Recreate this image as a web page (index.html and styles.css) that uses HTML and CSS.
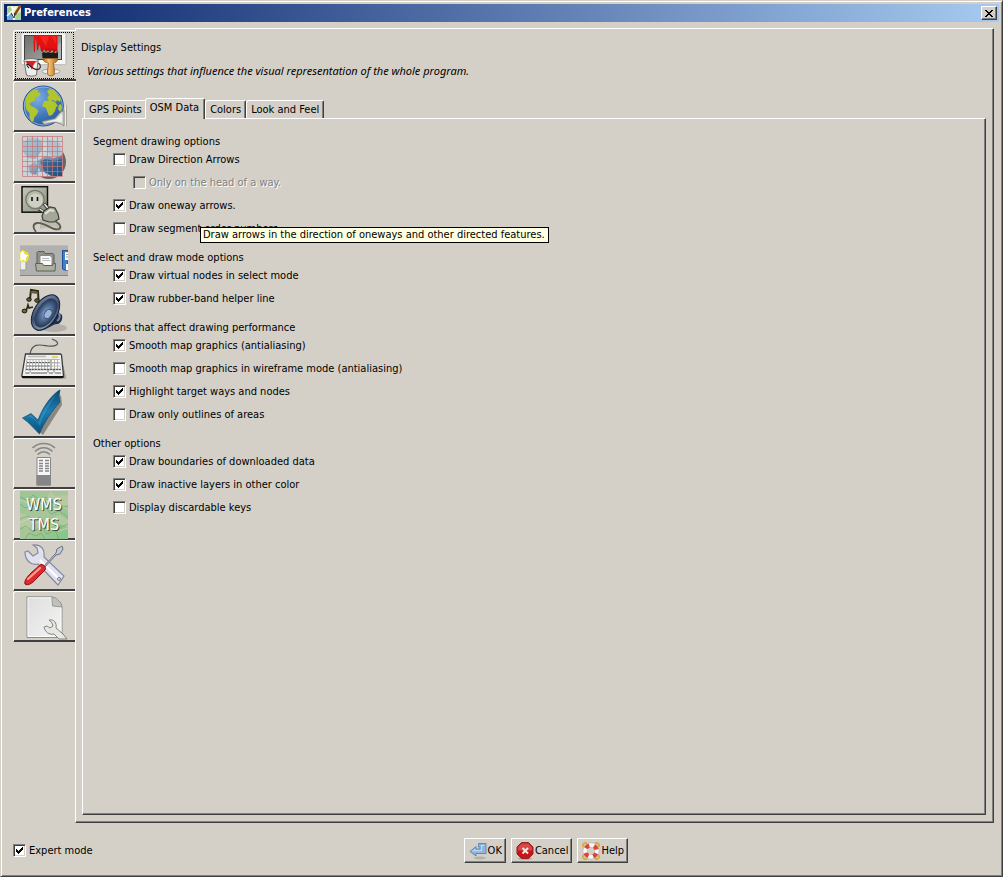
FILE: index.html
```
<!DOCTYPE html>
<html lang="en">
<head>
<meta charset="utf-8">
<title>Preferences</title>
<link rel="stylesheet" href="styles.css">
</head>
<body>
<div class="window">
  <header class="titlebar">
    <svg class="titlebar-icon" viewBox="0 0 16 16" aria-hidden="true">
      <rect x="1" y="1" width="14" height="14" rx="1" fill="#e9e6c0"/>
      <path d="M1 3l4-1 3 3-2 3-5 1z" fill="#9fcf8a"/>
      <path d="M1 9l5-1 2 3-1 4H1z" fill="#6aaede"/>
      <path d="M10 9l5-2v8H9z" fill="#a4d496"/>
      <path d="M1 11l9-9M6 1l2 14" stroke="#fff" stroke-width="1.600"/>
      <path d="M14.500 .5L8.500 10" stroke="#8a4a18" stroke-width="2.400"/>
      <path d="M5 8l3 5 1-5" fill="none" stroke="#333" stroke-width="1"/>
    </svg>
    <h1 class="titlebar-text">Preferences</h1>
    <button class="close" type="button" aria-label="Close">
      <svg width="8" height="7" viewBox="0 0 8 7" shape-rendering="crispEdges" aria-hidden="true"><path d="M0 0h2v1h1v1h2v-1h1v-1h2v1h-1v1h-1v1h-1v1h1v1h1v1h1v1h-2v-1h-1v-1h-2v1h-1v1h-2v-1h1v-1h1v-1h1v-1h-1v-1h-1v-1h-1z"/></svg>
    </button>
  </header>

  <div class="main">
    <nav class="categories" aria-label="Categories">
      <button class="category category-selected" type="button" aria-label="Display Settings">
        <svg class="category-icon" viewBox="0 0 48 48">
          <defs>
            <linearGradient id="screen" x1="0" y1="0" x2="1" y2="1"><stop offset="0" stop-color="#6c6f6c"/><stop offset="1" stop-color="#a9aca9"/></linearGradient>
            <linearGradient id="wood"><stop offset="0" stop-color="#b46a10"/><stop offset=".4" stop-color="#f3c078"/><stop offset="1" stop-color="#b46a10"/></linearGradient>
            <linearGradient id="paint" x1="0" y1="0" x2="0" y2="1"><stop offset="0" stop-color="#e81410"/><stop offset=".7" stop-color="#e01010"/><stop offset="1" stop-color="#a80808"/></linearGradient>
          </defs>
          <ellipse cx="31" cy="39.500" rx="9" ry="2.500" fill="#eee" stroke="#888" stroke-width=".7"/>
          <rect x="1" y=".7" width="45" height="32" rx="1.500" fill="#f6f6f4" stroke="#a9aba8" stroke-width=".8"/>
          <rect x="4.500" y="3.500" width="37" height="24" fill="url(#screen)" stroke="#404240"/>
          <path d="M24 27L41 10v17z" fill="#c5c7c5" opacity=".45"/>
          <path d="M14 3.500H37.500V21l-1.500-2-2 2-2-3-2 3-2-3-2 2-2-3-1 3-2-1-1-5-1-1-1 5-1 .5-.5-9-1-3-.500 13-1 .5-.500-10z" fill="url(#paint)"/>
          <path d="M20 4h9l-3 10-3-4zM31 4h5v8z" fill="#ff3028" opacity=".6"/>
          <path d="M22 21l2-1 2 1 2-1 3 1 2-1 2 1 3-1v6H22.500z" fill="#1c1c1c"/>
          <path d="M23 26.500h14.500c.5 3-2 4-4 4.500 0 3 1.500 7 .8 11-.6 2.500-6 2.500-6.600 0-.7-4 .9-8 .6-11-2-.5-5.300-1-5.300-4.500z" fill="url(#wood)" stroke="#8a4c08" stroke-width=".7"/>
          <path d="M4 28.500l2.500 14.500c2 1.500 8 1.500 10 0L18 28.500z" fill="#eceeec" stroke="#555" stroke-width=".8"/>
          <ellipse cx="11" cy="28.500" rx="7" ry="2" fill="#f4dede" stroke="#666" stroke-width=".8"/>
          <path d="M6 29h10l-3 5-1 4-2-4-3-2z" fill="#e11c1c"/>
          <path d="M9 36c-3-3-3-5 0-3 4 3 7 6 10 4 2-1 2-5-1-6" fill="none" stroke="#252525" stroke-width="1.100"/>
        </svg>
      </button>
      <button class="category" type="button" aria-label="Connection Settings">
        <svg class="category-icon" viewBox="0 0 48 48">
          <defs>
            <radialGradient id="sea" cx=".35" cy=".3" r=".8"><stop offset="0" stop-color="#7eaee0"/><stop offset=".6" stop-color="#3f74b8"/><stop offset="1" stop-color="#24559a"/></radialGradient>
          </defs>
          <circle cx="23.300" cy="23" r="20" fill="url(#sea)" stroke="#1f4f94"/>
          <circle cx="23.300" cy="23" r="19" fill="none" stroke="#9dc0ea" stroke-width=".8"/>
          <path d="M5.500 17c1-5 5-9 9-10.500l4 .5-1 2 3 1-1 3-4 1-1 4-3 1-2 2 2 2 4 2 3 3-2 4-2 2-1 4-2 1-2-5v-4l-3-3-1-4z" fill="#b1c52c"/>
          <path d="M27 8l3-2 4 1 4 5 3 4-1 3-3-2-1 2-3-2-3 1-3-3 2-3zM24 18l6-1 5 2 3 4-2 1-1 4-3 4-3 1-2-5-1-3-4-2z" fill="#b1c52c"/>
          <path d="M39 22l2-1 1 4-2 4-2-3z" fill="#b1c52c"/>
          <path d="M22 38.500l13-3 5-6 4-2V43l-3-2-6-2-11 2.500z" fill="#c9cbc6" stroke="#7d807a" stroke-width=".8"/>
          <path d="M24 39.500l12-3 6-6v9l-6-1z" fill="#eef0ec"/>
          <path d="M46.500 22v22" stroke="#a9a7a2"/><path d="M45.500 22v22" stroke="#ecebe8"/>
        </svg>
      </button>
      <button class="category" type="button" aria-label="Map Settings">
        <svg class="category-icon" viewBox="0 0 48 48">
          <defs>
            <linearGradient id="mapfade" x1="0" y1="0" x2="1" y2="1"><stop offset="0" stop-color="#b4c3cf"/><stop offset=".5" stop-color="#93abc0"/><stop offset="1" stop-color="#245080"/></linearGradient>
          </defs>
          <circle cx="29" cy="28" r="17" fill="#494b4d" opacity=".8"/>
          <rect x="2.500" y="2.500" width="40" height="40" fill="#ccd2d5"/>
          <path d="M3 8l9-5 9 3 2 8-5 8-3 3-7-1-5-6zM17 27l8-5 9 2 8-3v21H31l-6-4-5-1zM8 32l7-4 4 5-3 8-6-2z" fill="url(#mapfade)"/>
          <path d="M27 5l13 4 2 12-9 2-6-5z" fill="#b2c2cc"/>
          <path d="M20 27l6-2 8 2 8-2v17H33l-8-3z" fill="#1f4f80" opacity=".65"/>
          <path d="M2.500 2.500h40v40h-40zM7.500 2.500v40M12.500 2.500v40M17.500 2.500v40M22.500 2.500v40M27.500 2.500v40M32.500 2.500v40M37.500 2.500v40M2.500 7.500h40M2.500 12.500h40M2.500 17.500h40M2.500 22.500h40M2.500 27.500h40M2.500 32.500h40M2.500 37.500h40" fill="none" stroke="#c87478" stroke-width="1" opacity=".7"/>
        </svg>
      </button>
      <button class="category" type="button" aria-label="Plugins">
        <svg class="category-icon" viewBox="0 0 48 48">
          <defs>
            <linearGradient id="plate" x1="0" y1="0" x2="1" y2="1"><stop offset="0" stop-color="#c5c8b8"/><stop offset="1" stop-color="#8b9080"/></linearGradient>
          </defs>
          <path d="M20 34l20 4 2 9-8-6-14 3z" fill="#8c8a84" opacity=".3"/>
          <rect x="2" y="1.700" width="25.500" height="25.500" fill="url(#plate)" stroke="#111" stroke-width="1.500"/>
          <circle cx="15" cy="14.500" r="9.200" fill="#b6baaa" stroke="#757a6b" stroke-width="1.300"/>
          <circle cx="15.500" cy="15.500" r="7" fill="#cdd0c3"/>
          <path d="M12 12v4M17.500 12v4" stroke="#111" stroke-width="1.600"/>
          <path d="M19 24l6 4M24 18.500l5 6" stroke="#333" stroke-width="3.200"/>
          <path d="M19.500 24l6 4M24.500 19l5 6" stroke="#eee" stroke-width="1.400"/>
          <path d="M22 31l2-5 6-4 5 1 3 6 1 5-5 3-5 0-6-2z" fill="#a3a896" stroke="#3c4034" stroke-width="1.200"/>
          <path d="M25 29l5-4 4 1" stroke="#e2e4da" stroke-width="2" fill="none"/>
          <path d="M35 36c5 3 7 6 4 8-5 3-14-7-22-6-5 1-4 5-1 9" fill="none" stroke="#585d4d" stroke-width="1.800"/>
        </svg>
      </button>
      <button class="category" type="button" aria-label="Toolbar">
        <svg class="category-icon" viewBox="0 0 48 48">
          <rect y="9" width="48" height="31" fill="#b0b0b0"/>
          <path d="M0 9.500h48" stroke="#bcbcbc"/><path d="M0 39.500h48" stroke="#858585"/>
          <path d="M0 17h6v17H0z" fill="#eeeeea" stroke="#999"/>
          <circle cx="3" cy="20.500" r="6" fill="#f5e92a" opacity=".8"/>
          <path d="M3 14l2 4 4 1-3 3 1 4-4-2-3 2v-9z" fill="#fff" stroke="#e6d200" stroke-width=".6"/>
          <path d="M17 31V16.500l1-1h6l1 2h7.500l1.500 1V31z" fill="#8e9384" stroke="#5d6155"/>
          <path d="M20 19.500h10l2 2V31H20z" fill="#fafafa" stroke="#888"/>
          <path d="M22 22.500h7M22 24.500h8" stroke="#bbb"/>
          <path d="M15.500 27.500h7l1 2h9l1-2h2l-.5 7.500H16.500z" fill="#abb09f" stroke="#5d6155"/>
          <path d="M42.500 14.500H48V34h-4l-1.500-1z" fill="#3f80c8" stroke="#1e4f92"/>
          <path d="M45 15h3v9h-3zM46 28h2v6h-2z" fill="#fff"/><path d="M45 15.500h3" stroke="#e24b20" stroke-width="1.500"/>
          <path d="M46 18.500h2M46 21h2" stroke="#999"/>
        </svg>
      </button>
      <button class="category" type="button" aria-label="Audio Settings">
        <svg class="category-icon" viewBox="0 0 48 48">
          <defs>
            <linearGradient id="cone" x1="0" y1="0" x2="1" y2="1"><stop offset="0" stop-color="#8393ad"/><stop offset=".5" stop-color="#3a4d6e"/><stop offset="1" stop-color="#aab9cf"/></linearGradient>
            <radialGradient id="horn"><stop offset="0" stop-color="#b9cce6"/><stop offset=".35" stop-color="#6080ac"/><stop offset="1" stop-color="#263650"/></radialGradient>
          </defs>
          <ellipse cx="34" cy="41" rx="13" ry="4" fill="#77736c" opacity=".35"/>
          <path d="M34 8c4 6 3 12 3 16l5 4c1 4-1 8-4 9-5-1-11 7-21 7z" fill="#1e2b45"/>
          <path d="M38 26c3 2 2 6-1 8" stroke="#7486a4" stroke-width="2" fill="none"/>
          <ellipse cx="25.500" cy="25.500" rx="11.500" ry="19.500" transform="rotate(32 25.500 25.500)" fill="url(#cone)" stroke="#16213a" stroke-width="1"/>
          <ellipse cx="26" cy="26" rx="9" ry="16" transform="rotate(32 26 26)" fill="url(#horn)"/>
          <ellipse cx="28" cy="27" rx="3.500" ry="5" transform="rotate(32 28 27)" fill="#9fb5d4" stroke="#3c5580"/>
          <path d="M10 12l1-9 7 1 .5 9" fill="none" stroke="#2d2914" stroke-width="2"/>
          <path d="M10.500 5l7.500 1" stroke="#5f5836" stroke-width="2"/>
          <ellipse cx="9" cy="12.500" rx="2.300" ry="1.800" fill="#5f5836" stroke="#1a1808"/><ellipse cx="17" cy="13.500" rx="2.300" ry="1.800" fill="#5f5836" stroke="#1a1808"/>
          <ellipse cx="4.500" cy="24" rx="2.400" ry="1.900" fill="#6e673f" stroke="#1a1808"/>
          <path d="M6.500 23l1.500-5 1 3 4-1" fill="none" stroke="#2d2914" stroke-width="1.600"/>
        </svg>
      </button>
      <button class="category" type="button" aria-label="Keyboard Shortcuts">
        <svg class="category-icon" viewBox="0 0 48 48">
          <path d="M3 40.500h43l-1-6-4-16 3 21z" fill="#777" opacity=".6"/>
          <path d="M10 16c2-12 11-9 18-8 8 1 12-2 8-5l-4-2" fill="none" stroke="#555" stroke-width="1.200"/>
          <path d="M5.500 16h35l1 1L43.500 38l-1.500 1.500H3L1.800 38z" fill="#efefed" stroke="#3b3b3b" stroke-width="1.300"/>
          <path d="M2 39h41.500" stroke="#101010" stroke-width="2"/>
          <path d="M8 18.500h18" stroke="#b9b9b7" stroke-width="1.500"/><path d="M32 19h6" stroke="#e0cf3c" stroke-width="1.600"/>
          <path d="M6.500 21h33l1.500 13.500H5z" fill="#b4b4b2"/>
          <path d="M7.500 23h22M7 26.500h23M7 29.500h23M32 23h8M32 26.500h8M32 29.500h8.500" stroke="#fff" stroke-width="2" stroke-dasharray="2 1"/>
          <path d="M7 24.500h22.500M6.500 28h23.500M6 31.500h35" stroke="#555" stroke-width=".9" stroke-dasharray="2 1"/>
          <path d="M5.500 33.500h4M11 33.500h16M29 33.500h4M35 33.500h6" stroke="#fff" stroke-width="2.200"/>
          <path d="M5.500 35h4M11 35h16M29 35h4M35 35h6" stroke="#555" stroke-width=".9"/>
        </svg>
      </button>
      <button class="category" type="button" aria-label="Data Validator">
        <svg class="category-icon" viewBox="0 0 48 48">
          <defs>
            <linearGradient id="tick" x1="0" y1="0" x2="0" y2="1"><stop offset="0" stop-color="#0b4a74"/><stop offset=".5" stop-color="#1a7fb2"/><stop offset="1" stop-color="#0c4f7c"/></linearGradient>
          </defs>
          <path d="M6 31l8-3 6 6L41 6l1 10L23 46z" fill="#5a5852" opacity=".6"/>
          <path d="M2.500 29l8.500-4.500 7 6.500C22 20 29 9 38 2l2-1c-1 5-1 8 0 12-8 9-16 20-20.500 32C14 40 10 34 2.500 29z" fill="url(#tick)" stroke="#0a426a" stroke-width=".6"/>
          <path d="M5 29l6-3 7.500 7.500C23 22 29 12 37 5c-5 7-13 18-17 32-3-5-7-8-10-9z" fill="#4ba4cf" opacity=".4"/>
        </svg>
      </button>
      <button class="category" type="button" aria-label="Remote Control">
        <svg class="category-icon" viewBox="0 0 48 48">
          <g fill="none" stroke="#868686" stroke-width="1.600"><path d="M12.500 8c6-6 16.500-6 22.500 0"/><path d="M15 11.500c5-5 12.500-5 17.500 0"/><path d="M17.500 14.500c4-3.500 8.500-3.500 12.500 0"/></g>
          <path d="M17 17.500h13.500V45H17z" fill="#f6f6f6" stroke="#868686" stroke-width="1"/>
          <path d="M16.500 35h14.500v10.500H16.500z" fill="#868686"/>
          <path d="M19 20.500h4M25 20.500h4M19 23.500h4M25 23.500h4M19 26h4M25 26h4M19 28.500h4M25 28.500h4M19 31h4M25 31h4" stroke="#868686" stroke-width="1.500"/>
        </svg>
      </button>
      <button class="category" type="button" aria-label="Imagery Preferences">
        <svg class="category-icon" viewBox="0 0 48 48">
          <defs><linearGradient id="terrain" x1="0" y1="0" x2="1" y2="1"><stop offset="0" stop-color="#9cc595"/><stop offset=".5" stop-color="#a9c59a"/><stop offset="1" stop-color="#84c588"/></linearGradient></defs>
          <rect width="48" height="48" fill="url(#terrain)"/>
          <path d="M30 0l6 5 12-1v12l-9-3-7 3-6-6zM0 22l8 2 5 6-4 8-9-2zM34 26l6-2 8 5v7l-8-3z" fill="#bdc9a4" opacity=".8"/>
          <path d="M0 6l7 3 6-5 7 5 6-3 4 6 8-2 5 6 5-1M0 13l5 4 8-3 4 6 9-3 5 6 8-3 9 6M0 28l8-3 5 5 7-4 5 7 9-3 5 7 9-4M0 38l6-3 7 6 8-5 6 7 8-4 4 9M5 48l4-6 7 3 5-3 4 6" fill="none" stroke="#6fae70" stroke-width="1" opacity=".75"/>
          <path d="M0 9l8 3 5-5 7 6 7-3 5 5 7-2 9 6M0 32l8-4 6 5 6-3 6 6 9-2 4 6 9-3" fill="none" stroke="#d0dcba" stroke-width=".8" opacity=".8"/>
          <g class="imagery-text"><text x="24" y="19">WMS</text><text x="24" y="39">TMS</text></g>
        </svg>
      </button>
      <button class="category" type="button" aria-label="Advanced Tools">
        <svg class="category-icon" viewBox="0 0 48 48">
          <path d="M5 10l3-1 5 5 5-3-1-5-4-3c8-1 12 4 11 12l20 19-6 9-20-21C11 24 5 18 5 10z" fill="#e0e1ee" stroke="#85889b" stroke-width="1.200"/>
          <path d="M20 18l19 19" stroke="#fff" stroke-width="2"/>
          <circle cx="39" cy="37" r="1.600" fill="#d4d0c8" stroke="#85889b"/>
          <path d="M24 24l12-13 1-4 5-3 1 3-3 5-4 1-12 13z" fill="#c4c9d6" stroke="#697083" stroke-width="1"/>
          <path d="M5 42c-1-3 2-7 6-11l9-8c2-2 7 2 5 5l-9 9c-4 5-9 7-11 5z" fill="#dc2b2f" stroke="#98090d" stroke-width="1"/>
          <path d="M8 37l12-11" stroke="#ff9c98" stroke-width="2.200" stroke-linecap="round"/>
        </svg>
      </button>
      <button class="category" type="button" aria-label="Advanced Preferences">
        <svg class="category-icon" viewBox="0 0 48 48">
          <defs><linearGradient id="page" x1="0" y1="0" x2="1" y2="1"><stop offset="0" stop-color="#dedede"/><stop offset="1" stop-color="#f4f4f4"/></linearGradient></defs>
          <path d="M7 3.800h25L42 13.500v31H7z" fill="url(#page)" stroke="#8b8d89"/>
          <path d="M8 4.800h23.500L41 14v29.500H8z" fill="none" stroke="#fff" stroke-width=".8"/>
          <path d="M32 4l.5 9 9.500 1-1-4-5-5z" fill="#c0c0bd" stroke="#8b8d89" stroke-width=".8"/>
          <path d="M24 34l3-1 3 2 3-2-1-3-3-3c5-1 8 3 7 8l7 6 4 5h-8l-5-5c-5 1-9-2-10-7z" fill="#e6e8e3" stroke="#80837c" stroke-width="1"/>
        </svg>
      </button>
    </nav>

    <main class="panel">
      <h2 class="panel-title">Display Settings</h2>
      <p class="panel-note">Various settings that influence the visual representation of the whole program.</p>
      <div class="tabs" role="tablist">
        <button class="tab" type="button" role="tab">GPS Points</button>
        <button class="tab tab-selected" type="button" role="tab" aria-selected="true">OSM Data</button>
        <button class="tab" type="button" role="tab">Colors</button>
        <button class="tab" type="button" role="tab">Look and Feel</button>
      </div>
      <form class="options" role="tabpanel">
        <section class="group">
          <h3 class="group-title">Segment drawing options</h3>
          <label class="option"><input class="check" type="checkbox">Draw Direction Arrows</label>
          <label class="option option-nested option-disabled"><input class="check" type="checkbox" disabled>Only on the head of a way.</label>
          <div class="tip-anchor">
            <label class="option"><input class="check" type="checkbox" checked aria-describedby="tip">Draw oneway arrows.</label>
            <div class="tooltip" id="tip" role="tooltip">Draw arrows in the direction of oneways and other directed features.</div>
          </div>
          <label class="option"><input class="check" type="checkbox">Draw segment order numbers</label>
        </section>
        <section class="group">
          <h3 class="group-title">Select and draw mode options</h3>
          <label class="option"><input class="check" type="checkbox" checked>Draw virtual nodes in select mode</label>
          <label class="option"><input class="check" type="checkbox" checked>Draw rubber-band helper line</label>
        </section>
        <section class="group">
          <h3 class="group-title">Options that affect drawing performance</h3>
          <label class="option"><input class="check" type="checkbox" checked>Smooth map graphics (antialiasing)</label>
          <label class="option"><input class="check" type="checkbox">Smooth map graphics in wireframe mode (antialiasing)</label>
          <label class="option"><input class="check" type="checkbox" checked>Highlight target ways and nodes</label>
          <label class="option"><input class="check" type="checkbox">Draw only outlines of areas</label>
        </section>
        <section class="group">
          <h3 class="group-title">Other options</h3>
          <label class="option"><input class="check" type="checkbox" checked>Draw boundaries of downloaded data</label>
          <label class="option"><input class="check" type="checkbox" checked>Draw inactive layers in other color</label>
          <label class="option"><input class="check" type="checkbox">Display discardable keys</label>
        </section>
      </form>
    </main>
  </div>

  <footer class="footer">
    <label class="expert"><input class="check" type="checkbox" checked>Expert mode</label>
    <div class="actions">
      <button class="action" type="button">
        <svg class="action-icon" viewBox="0 0 20 20" aria-hidden="true"><ellipse cx="12" cy="17" rx="6" ry="1.500" fill="#b5b1a9"/><path d="M2 10.500L8 5.500v2.500h4V6h-1.500V2.500H18V12.500H8V15z" fill="#8fb6e0" stroke="#5583b8" stroke-width=".9"/><path d="M4.500 10.500l2.500-2v1.200h6.500V4.500H16" fill="none" stroke="#c9def5"/></svg>
        OK</button>
      <button class="action" type="button">
        <svg class="action-icon" viewBox="0 0 20 20" aria-hidden="true"><ellipse cx="10" cy="17.500" rx="7" ry="1.500" fill="#aaa69e"/><path d="M6.500 1.500h7l4.500 4.500v7l-4.500 4.500h-7L2 13V6z" fill="#c81418" stroke="#9a2224"/><path d="M6.800 2.500h6.400L17 6.300v3.200H3V6.300z" fill="#e06a68" opacity=".6"/><path d="M7.500 7l5.500 5.500M13 7l-5.500 5.500" stroke="#f6e4e4" stroke-width="2"/></svg>
        Cancel</button>
      <button class="action" type="button">
        <svg class="action-icon" viewBox="0 0 20 20" aria-hidden="true"><path d="M2 6V3.500L3.500 2H6M14 2h2.500L18 3.500V6M18 14v2.500L16.500 18H14M6 18H3.500L2 16.500V14" fill="none" stroke="#d8b040" stroke-width="2"/><circle cx="10" cy="10" r="5.800" fill="none" stroke="#a9a6a2" stroke-width="5.200"/><circle cx="10" cy="10" r="5.800" fill="none" stroke="#f6f6f6" stroke-width="4.200"/><circle cx="10" cy="10" r="5.800" fill="none" stroke="#dd4338" stroke-width="4.200" stroke-dasharray="4.100 5.010" stroke-dashoffset="-2.500"/></svg>
        Help</button>
    </div>
  </footer>
</div>
</body>
</html>
```
FILE: styles.css
```
:root {
  --face: #d4d0c8;
  --light: #ffffff;
  --shade: #808080;
  --dark: #404040;
}

* {
  box-sizing: border-box;
}

body {
  margin: 0;
  background: var(--face);
  color: #000;
  font: 11px/14px Tahoma, "DejaVu Sans Condensed", "Noto Sans", sans-serif;
}

h1, h2, h3, p {
  margin: 0;
  font-size: inherit;
  font-weight: normal;
}

button {
  margin: 0;
  padding: 0;
  background: var(--face);
  color: inherit;
  font: inherit;
  white-space: nowrap;
}

.window {
  display: flex;
  flex-direction: column;
  min-height: 100vh;
  padding: 3px;
  border: 1px solid;
  border-color: var(--face) var(--dark) var(--dark) var(--face);
  box-shadow: inset 1px 1px var(--light), inset -1px -1px var(--shade);
}

.titlebar {
  display: flex;
  align-items: center;
  height: 18px;
  padding: 0 2px;
  background: linear-gradient(to right, #0a246a, #a6caf0);
  color: #fff;
}

.titlebar-icon {
  width: 16px;
  height: 16px;
  margin-right: 2px;
}

.titlebar-text {
  flex: 1;
  font-weight: bold;
}

.close {
  display: grid;
  place-items: center;
  width: 16px;
  height: 14px;
  border: 1px solid;
  border-color: var(--light) var(--dark) var(--dark) var(--light);
  box-shadow: inset -1px -1px var(--shade);
}

.main {
  display: flex;
  flex: 1;
  padding: 6px 5px 0 9px;
}

.categories {
  display: flex;
  flex-direction: column;
  flex: none;
  width: 62px;
  padding-top: 2px;
}

.category {
  height: 51px;
  padding: 1px 0 0 6px;
  border: solid;
  border-width: 1px 0 1px 1px;
  border-color: var(--light) var(--dark) var(--dark) var(--light);
  border-top-left-radius: 3px;
  box-shadow: inset 0 -1px var(--dark);
  text-align: left;
}

.category-selected {
  z-index: 1;
  margin-right: -1px;
  outline: 1px dotted #000;
  outline-offset: -3px;
}

.category-icon {
  display: block;
  width: 48px;
  height: 48px;
}

.imagery-text {
  fill: #fff;
  font: 16px "DejaVu Sans Condensed", sans-serif;
  text-anchor: middle;
  text-shadow: 1px 1px #3c4a3c;
}

.panel {
  display: flex;
  flex: 1;
  flex-direction: column;
  min-width: 0;
  padding: 12px 7px 7px 5px;
  border: 1px solid;
  border-color: var(--light) var(--dark) var(--dark) var(--light);
  box-shadow: inset -1px -1px var(--shade);
}

.panel-note {
  padding: 9px 6px 20px;
  font-family: Tahoma, "Noto Sans", sans-serif;
  font-style: italic;
}

.tabs {
  display: flex;
  align-items: flex-end;
  height: 20px;
  padding-left: 3px;
}

.tab {
  height: 18px;
  padding: 0 4px;
  border: solid;
  border-width: 1px 1px 0;
  border-color: var(--light) var(--dark) var(--dark) var(--light);
  border-radius: 3px 2px 0 0;
  box-shadow: inset -1px 0 var(--shade);
}

.tab-selected {
  z-index: 1;
  height: 21px;
  margin: 0 0 -1px -2px;
  padding: 0 5px 3px 4px;
}

.options {
  flex: 1;
  margin-left: 1px;
  padding: 17px 10px;
  border: 1px solid;
  border-color: var(--light) var(--dark) var(--dark) var(--light);
  box-shadow: inset -1px -1px var(--shade);
}

.group {
  margin-bottom: 12px;
}

.group-title {
  line-height: 12px;
}

.option {
  display: flex;
  align-items: center;
  width: fit-content;
  height: 23px;
  padding-left: 20px;
}

.option-nested {
  padding-left: 40px;
}

.option-disabled {
  color: var(--shade);
  text-shadow: 1px 1px var(--light);
}

.check {
  appearance: none;
  flex: none;
  width: 13px;
  height: 13px;
  margin: 0 3px 0 0;
  border: 1px solid;
  border-color: var(--shade) var(--light) var(--light) var(--shade);
  background: #fff no-repeat center / 7px 7px;
  box-shadow: inset 1px 1px var(--dark), inset -1px -1px var(--face);
}

.check:checked {
  background-image: url("data:image/svg+xml,%3Csvg xmlns='http://www.w3.org/2000/svg' viewBox='0 0 7 7' shape-rendering='crispEdges'%3E%3Cpath d='M0 2h1v1h1v1h1v-1h1v-1h1v-1h1v-1h1v3h-1v1h-1v1h-1v1h-1v1h-1v-1h-1v-1h-1z'/%3E%3C/svg%3E");
}

.check:disabled {
  background-color: var(--face);
}

.tip-anchor {
  position: relative;
}

.tooltip {
  position: absolute;
  top: 33px;
  left: 107px;
  padding: 0 3px 0 2px;
  border: 1px solid #000;
  background: #ffffe1;
  white-space: nowrap;
}

.footer {
  display: flex;
  align-items: center;
  padding: 15px 0 10px 9px;
}

.expert {
  display: flex;
  align-items: center;
}

.actions {
  display: flex;
  flex: 1;
  gap: 5px;
  justify-content: center;
}

.action {
  display: flex;
  align-items: center;
  height: 25px;
  padding: 0 3px;
  border: 1px solid;
  border-color: var(--light) var(--dark) var(--dark) var(--light);
  box-shadow: inset -1px -1px var(--shade);
}

.action-icon {
  width: 20px;
  height: 20px;
}
```
